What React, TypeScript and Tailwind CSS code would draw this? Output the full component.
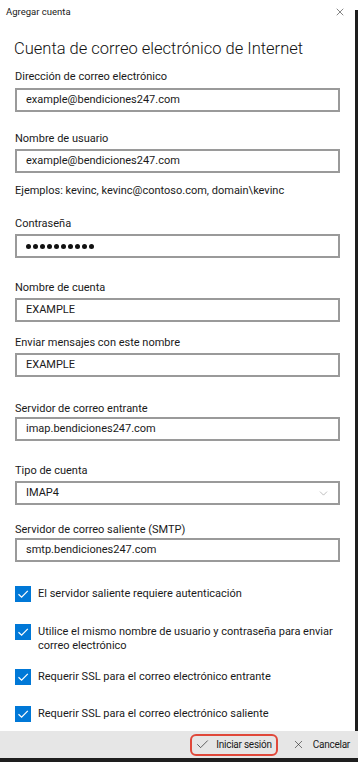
import { Check, X, ChevronDown } from "lucide-react";

const FONT = "font-['Roboto',sans-serif]";

function Field({
  label,
  value,
  labelClass,
  boxClass,
  select,
}: {
  label: string;
  value: string;
  labelClass: string;
  boxClass: string;
  select?: boolean;
}) {
  return (
    <>
      <div className={`text-[11px] leading-[16px] text-[#1a1a1a] ${labelClass}`}>{label}</div>
      <div
        className={`flex h-[24px] items-center justify-between border-2 border-[#9a9a9a] pl-[9px] pr-[8px] text-[11px] text-[#1a1a1a] ${boxClass}`}
      >
        <span>{value}</span>
        {select && <ChevronDown size={13} strokeWidth={1} className="text-[#888]" />}
      </div>
    </>
  );
}

function CheckRow({ text, className }: { text: React.ReactNode; className: string }) {
  return (
    <div className={`flex items-start gap-[7px] ${className}`}>
      <div className="flex h-[16px] w-[16px] shrink-0 items-center justify-center bg-[#0078d7]">
        <svg width="12" height="12" viewBox="0 0 12 12" fill="none">
          <path d="M1.5 6.2 L4.6 9.2 L10.8 2.8" stroke="white" strokeWidth="1.2" />
        </svg>
      </div>
      <div className="whitespace-nowrap pt-[1px] text-[11px] leading-[14px] text-[#1a1a1a]">{text}</div>
    </div>
  );
}

export default function App() {
  return (
    <div className={`flex h-[762px] w-[358px] flex-col overflow-hidden bg-white ${FONT}`}>
      <div className="flex min-h-0 flex-1">
        <div className="flex min-w-0 flex-1 flex-col">
          <div className="flex h-[24px] items-center justify-between pl-[6px] pr-[9px]">
            <span className="text-[9.5px] text-[#1a1a1a]">Agregar cuenta</span>
            <X size={12} strokeWidth={1.2} className="text-[#333]" />
          </div>
          <div className="flex flex-col px-[15px]">
            <h1 className="-ml-[1px] mt-[15px] text-[16.5px] leading-[20px] font-light text-[#111]">
              Cuenta de correo electrónico de Internet
            </h1>
            <Field
              label="Dirección de correo electrónico"
              value="example@bendiciones247.com"
              labelClass="mt-[10px]"
              boxClass="mt-[3px]"
            />
            <Field
              label="Nombre de usuario"
              value="example@bendiciones247.com"
              labelClass="mt-[19px]"
              boxClass="mt-[2px]"
            />
            <div className="mt-[10px] text-[11px] leading-[16px] text-[#1a1a1a]">
              Ejemplos: kevinc, kevinc@contoso.com, domain\kevinc
            </div>
            <div className="mt-[17px] text-[11px] leading-[16px] text-[#1a1a1a]">Contraseña</div>
            <div className="mt-[2px] flex h-[24px] items-center gap-[2px] border-2 border-[#9a9a9a] pl-[9px]">
              {Array.from({ length: 10 }, (_, i) => (
                <span key={i} className="h-[5px] w-[5px] rounded-full bg-[#111]" />
              ))}
            </div>
            <Field label="Nombre de cuenta" value="EXAMPLE" labelClass="mt-[22px]" boxClass="mt-[2px]" />
            <Field
              label="Enviar mensajes con este nombre"
              value="EXAMPLE"
              labelClass="mt-[13px]"
              boxClass="mt-[2px]"
            />
            <Field
              label="Servidor de correo entrante"
              value="imap.bendiciones247.com"
              labelClass="mt-[24px]"
              boxClass="mt-[0px]"
            />
            <Field label="Tipo de cuenta" value="IMAP4" labelClass="mt-[22px]" boxClass="mt-[2px]" select />
            <Field
              label="Servidor de correo saliente (SMTP)"
              value="smtp.bendiciones247.com"
              labelClass="mt-[17px]"
              boxClass="mt-[0px]"
            />
            <CheckRow className="mt-[24px]" text="El servidor saliente requiere autenticación" />
            <CheckRow
              className="mt-[22px]"
              text={
                <>
                  Utilice el mismo nombre de usuario y contraseña para enviar
                  <br />
                  correo electrónico
                </>
              }
            />
            <CheckRow className="mt-[16px]" text="Requerir SSL para el correo electrónico entrante" />
            <CheckRow className="mt-[21px]" text="Requerir SSL para el correo electrónico saliente" />
          </div>
        </div>
        <div className="mt-[10px] w-[3px] bg-[#1e1e1e]" />
      </div>
      <div className="flex h-[27px] shrink-0 items-center justify-end bg-[#e6e6e6] pr-[8px] text-[10px] tracking-[-0.25px] text-[#1a1a1a]">
        <div className="flex h-[22px] items-center gap-[6px] rounded-[6px] border-2 border-[#e0483a] pl-[3px] pr-[4px]">
          <Check size={15} strokeWidth={1.1} className="text-[#222]" />
          <span>Iniciar sesión</span>
        </div>
        <div className="ml-[14px] flex items-center gap-[8px]">
          <X size={13} strokeWidth={1.1} className="text-[#222]" />
          <span>Cancelar</span>
        </div>
      </div>
      <div className="h-[4px] shrink-0 bg-[#1e1e1e]" />
    </div>
  );
}
